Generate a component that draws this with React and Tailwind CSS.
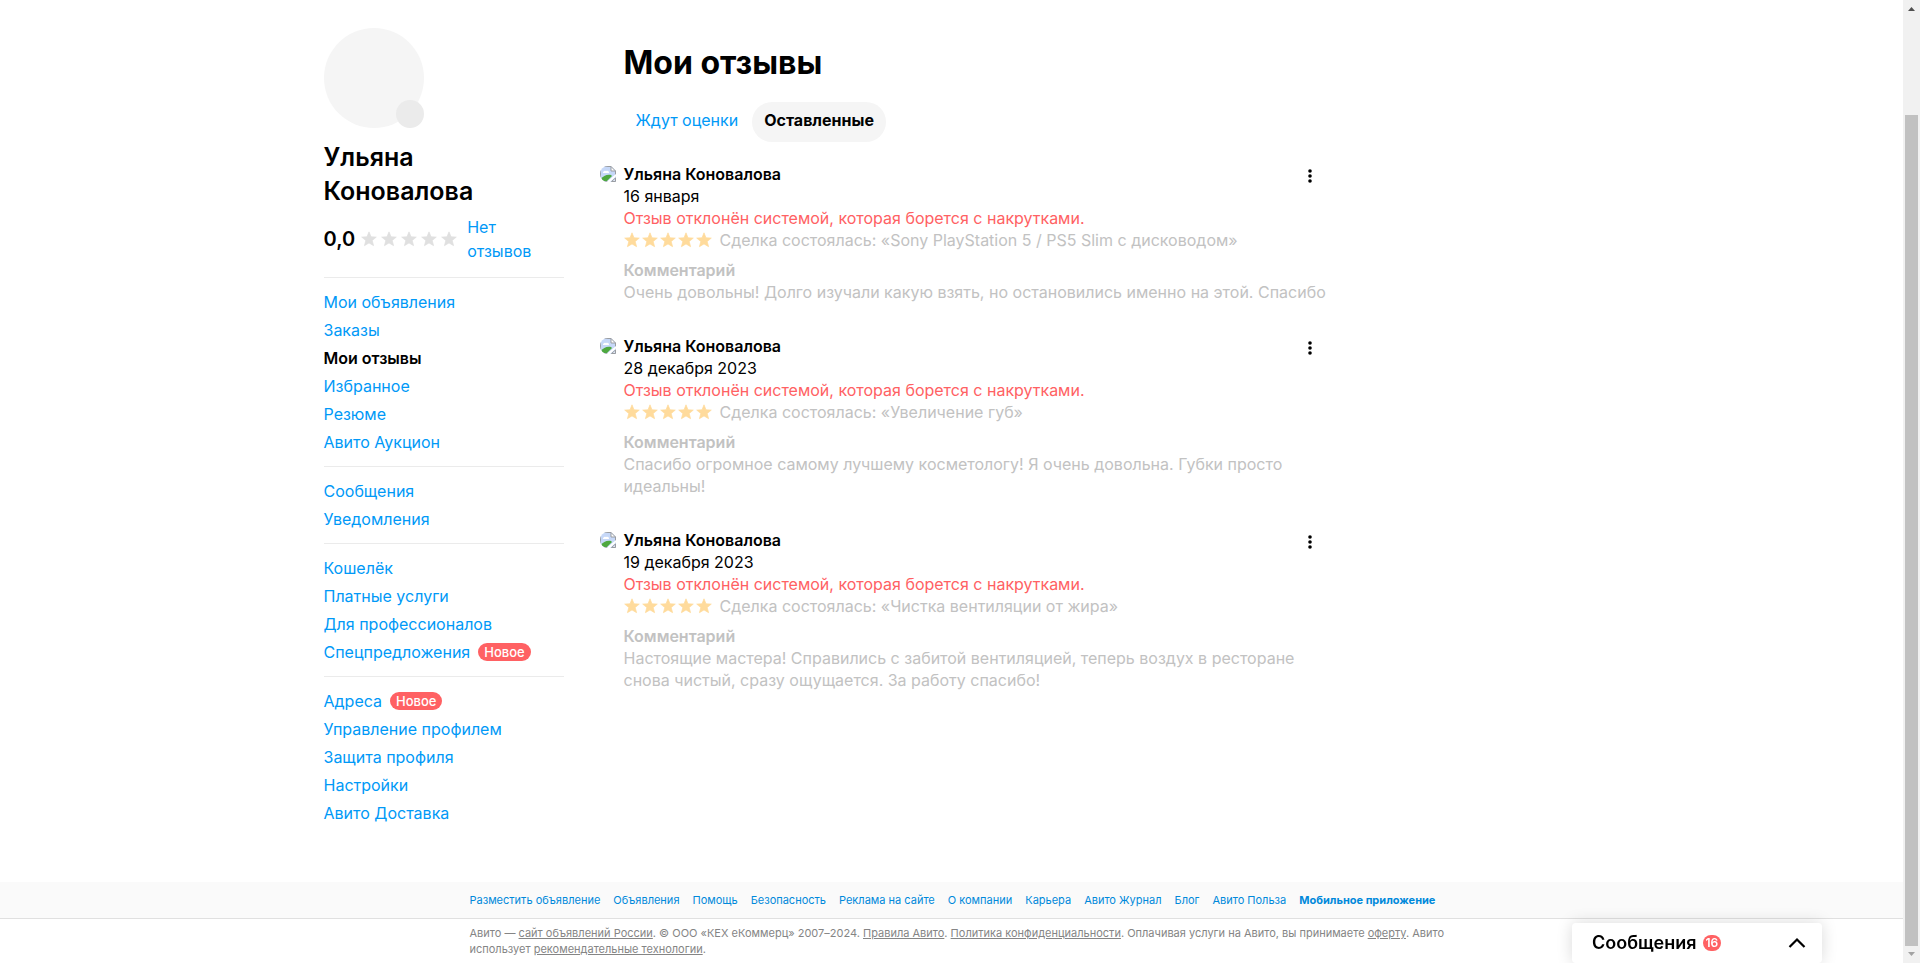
const MENU = [
  [
    { label: "Мои объявления" },
    { label: "Заказы" },
    { label: "Мои отзывы", active: true },
    { label: "Избранное" },
    { label: "Резюме" },
    { label: "Авито Аукцион" },
  ],
  [{ label: "Сообщения" }, { label: "Уведомления" }],
  [
    { label: "Кошелёк" },
    { label: "Платные услуги" },
    { label: "Для профессионалов" },
    { label: "Спецпредложения", isNew: true },
  ],
  [
    { label: "Адреса", isNew: true },
    { label: "Управление профилем" },
    { label: "Защита профиля" },
    { label: "Настройки" },
    { label: "Авито Доставка" },
  ],
];

const REVIEWS = [
  {
    id: 1,
    author: "Ульяна Коновалова",
    date: "16 января",
    deal: "Sony PlayStation 5 / PS5 Slim с дисководом",
    comment:
      "Очень довольны! Долго изучали какую взять, но остановились именно на этой. Спасибо",
  },
  {
    id: 2,
    author: "Ульяна Коновалова",
    date: "28 декабря 2023",
    deal: "Увеличение губ",
    comment:
      "Спасибо огромное самому лучшему косметологу! Я очень довольна. Губки просто идеальны!",
  },
  {
    id: 3,
    author: "Ульяна Коновалова",
    date: "19 декабря 2023",
    deal: "Чистка вентиляции от жира",
    comment:
      "Настоящие мастера! Справились с забитой вентиляцией, теперь воздух в ресторане снова чистый, сразу ощущается. За работу спасибо!",
  },
];

const FOOTER_LINKS = [
  "Разместить объявление",
  "Объявления",
  "Помощь",
  "Безопасность",
  "Реклама на сайте",
  "О компании",
  "Карьера",
  "Авито Журнал",
  "Блог",
  "Авито Польза",
];

function Stars({ className }) {
  return (
    <div className={`flex shrink-0 ${className}`}>
      {[1, 2, 3, 4, 5].map((n) => (
        <svg key={n} className="w-4 h-4" viewBox="0 0 16 16" fill="currentColor">
          <path
            d="M8 .8l2 5 5.300.300-4.100 3.400 1.400 5.200L8 11.900l-4.600 2.800 1.400-5.200L.7 6.100 6 5.800z"
            stroke="currentColor"
            strokeWidth="0.7"
            strokeLinejoin="round"
          />
        </svg>
      ))}
    </div>
  );
}

// Placeholder for an avatar that failed to load
function BrokenAvatar() {
  return (
    <svg className="w-4 h-4 shrink-0 rounded-l-lg" viewBox="0 0 16 16">
      <path d="M0 0h11l5 5v11H0z" fill="#c6d8f8" />
      <path d="M0 .5h11M.5 0v16M15.5 5v6M0 15.5h9" stroke="#9a9da1" fill="none" />
      <path d="M11 .5v4.5h4.5z" fill="#fff" stroke="#9a9da1" />
      <path d="M3 6.5a2 2 0 0 1 3-1.5 2 2 0 0 1 3 2H3z" fill="#fff" />
      <path d="M1 15v-2c2-3 6-5 10-4l1 1-5 5z" fill="#4ea83f" />
      <path d="M6.5 16l9.5-8v2.5L10 16z" fill="#fff" />
      <path d="M11.5 15.5h4V12z" fill="#dfe8f8" stroke="#9a9da1" />
    </svg>
  );
}

function Sidebar() {
  return (
    <aside className="w-60 shrink-0">
      <div className="relative w-[100px] h-[100px] rounded-full bg-[#f5f5f5]">
        <div className="absolute right-0 bottom-0 w-7 h-7 rounded-full bg-[#ebebeb]" />
      </div>

      <h2 className="mt-3 w-40 text-[25px] leading-[34px] font-semibold">
        Ульяна Коновалова
      </h2>

      <div className="mt-[7px] pb-1 flex items-center">
        <span className="text-xl leading-6 font-semibold">0,0</span>
        <Stars className="ml-1.5 gap-1 text-[#e0e0e0]" />
        <a href="#" className="ml-2.5 w-20 leading-6 text-[#0099f7]">
          Нет отзывов
        </a>
      </div>

      <nav>
        {MENU.map((group, i) => (
          <ul key={i} className="mt-2.5 pt-2.5 border-t border-[#ebebeb]">
            {group.map((item) => (
              <li key={item.label} className="flex items-center h-7">
                <a
                  href="#"
                  className={item.active ? "font-semibold text-black" : "text-[#0099f7]"}
                >
                  {item.label}
                </a>
                {item.isNew && (
                  <span className="ml-2 px-1.5 rounded-full bg-[#ff6163] text-[13px] leading-[18px] font-medium text-white">
                    Новое
                  </span>
                )}
              </li>
            ))}
          </ul>
        ))}
      </nav>
    </aside>
  );
}

function Review({ review }) {
  return (
    <article className="flex items-start">
      <div className="pt-[3px] pr-2">
        <BrokenAvatar />
      </div>
      <div className="flex-1 leading-[22px]">
        <h3 className="font-semibold">{review.author}</h3>
        <p>{review.date}</p>
        <p className="text-[#ff6163]">
          Отзыв отклонён системой, которая борется с накрутками.
        </p>
        <div className="flex items-center text-[#c2c2c2]">
          <Stars className="gap-0.5 text-[#ffdb9c]" />
          <span className="ml-2">Сделка состоялась: «{review.deal}»</span>
        </div>
        <h4 className="mt-2 font-semibold text-[#c2c2c2]">Комментарий</h4>
        <p className="-mr-6 text-[#c2c2c2]">{review.comment}</p>
      </div>
      <button
        type="button"
        aria-label="Действия с отзывом"
        className="w-0 h-6 flex justify-center cursor-pointer"
      >
        <svg className="w-6 h-6 shrink-0" viewBox="0 0 24 24">
          <circle cx="12" cy="8" r="1.8" />
          <circle cx="12" cy="13" r="1.8" />
          <circle cx="12" cy="18" r="1.8" />
        </svg>
      </button>
    </article>
  );
}

function Footer() {
  return (
    <footer className="mt-[55px] text-[11px] leading-4">
      <div className="bg-[#fafafa] border-b border-[#e0e0e0]">
        <nav className="max-w-[964px] mx-auto flex gap-[13px] h-9 items-center whitespace-nowrap text-[#0089db]">
          {FOOTER_LINKS.map((link) => (
            <a key={link} href="#">
              {link}
            </a>
          ))}
          <a href="#" className="font-bold">
            Мобильное приложение
          </a>
        </nav>
      </div>
      <div className="max-w-[964px] mx-auto py-1.5">
        <p className="-mr-6 text-[#858585]">
          Авито — <a href="#" className="underline">сайт объявлений России</a>. © ООО
          «КЕХ еКоммерц» 2007–2024. <a href="#" className="underline">Правила Авито</a>.{" "}
          <a href="#" className="underline">Политика конфиденциальности</a>. Оплачивая
          услуги на Авито, вы принимаете <a href="#" className="underline">оферту</a>.
          Авито использует{" "}
          <a href="#" className="underline">рекомендательные технологии</a>.
        </p>
      </div>
    </footer>
  );
}

function Scrollbar() {
  return (
    <div className="w-[17px] shrink-0 px-0.5 bg-[#f1f1f1] flex flex-col items-center">
      <svg className="w-[7px] h-[17px]" viewBox="0 0 7 17">
        <path d="M0 11l3.5-4L7 11z" fill="#505050" />
      </svg>
      <div className="h-[98px]" />
      <div className="flex-1 w-full bg-[#c1c1c1]" />
      <svg className="w-[7px] h-[17px]" viewBox="0 0 7 17">
        <path d="M0 6l3.5 4L7 6z" fill="#a3a3a3" />
      </svg>
    </div>
  );
}

function MessagesWidget() {
  return (
    <button
      type="button"
      className="fixed bottom-0 right-[98px] w-[250px] h-10 pl-5 pr-4 flex items-center rounded bg-white shadow-[0_0_16px_rgba(0,0,0,0.15)] cursor-pointer"
    >
      <span className="text-lg font-semibold">Сообщения</span>
      <span className="ml-1.5 px-[3px] rounded-full bg-[#ff6163] text-xs leading-4 font-semibold text-white">
        16
      </span>
      <svg className="ml-auto w-[18px] h-[18px]" viewBox="0 0 18 18" fill="none">
        <path d="M1.5 13L9 5.5l7.5 7.5" stroke="#000" strokeWidth="2.2" />
      </svg>
    </button>
  );
}

export default function App() {
  return (
    <div className="min-h-screen flex bg-white font-['Inter',sans-serif] text-base text-black">
      <div className="flex-1 min-w-0 flex flex-col">
        <div className="w-full max-w-[1256px] mx-auto pt-7 flex-1 flex">
          <Sidebar />
          <main className="ml-9 w-[710px]">
            <h1 className="ml-6 mt-[15px] text-[32px] leading-10 font-bold">Мои отзывы</h1>
            <div className="ml-6 mt-[19px] flex gap-0.5">
              <button type="button" className="h-10 px-3 pb-1 text-[#0099f7] cursor-pointer">
                Ждут оценки
              </button>
              <button
                type="button"
                className="h-10 px-3 pb-1 rounded-[20px] bg-[#f5f5f5] font-bold cursor-pointer"
              >
                Оставленные
              </button>
            </div>
            <div className="mt-[21px] flex flex-col gap-8">
              {REVIEWS.map((review) => (
                <Review key={review.id} review={review} />
              ))}
            </div>
          </main>
        </div>
        <Footer />
      </div>
      <Scrollbar />
      <MessagesWidget />
    </div>
  );
}
